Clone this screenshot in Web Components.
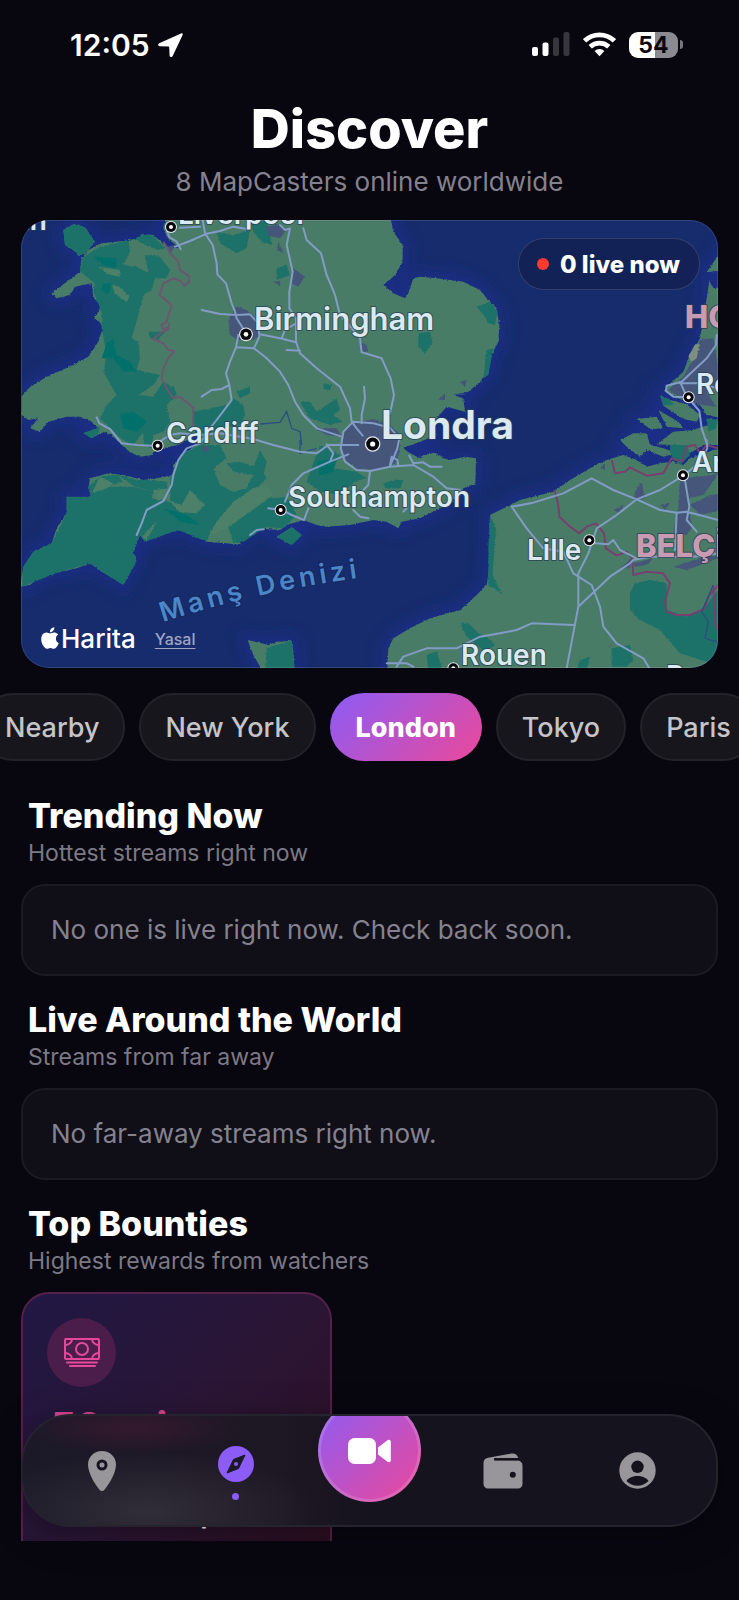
<!DOCTYPE html>
<html lang="en">
<head>
<meta charset="utf-8">
<meta name="viewport" content="width=device-width, initial-scale=1">
<title>Discover</title>
<style>
  body {
    margin: 0;
    background: #08060f;
    color: #fff;
    font-family: Inter, 'Liberation Sans', sans-serif;
  }
</style>
</head>
<body>
<discover-app>
  <status-bar slot="status" time="12:05" battery="54"></status-bar>
  <page-header>
    Discover
    <span slot="subtitle">8 MapCasters online worldwide</span>
  </page-header>
  <live-map>0 live now</live-map>
  <city-chips>
    <city-chip>Nearby</city-chip>
    <city-chip>New York</city-chip>
    <city-chip active>London</city-chip>
    <city-chip>Tokyo</city-chip>
    <city-chip>Paris</city-chip>
  </city-chips>
  <stream-section heading="Trending Now" subtitle="Hottest streams right now">
    <empty-card>No one is live right now. Check back soon.</empty-card>
  </stream-section>
  <stream-section heading="Live Around the World" subtitle="Streams from far away">
    <empty-card>No far-away streams right now.</empty-card>
  </stream-section>
  <stream-section heading="Top Bounties" subtitle="Highest rewards from watchers">
    <bounty-card reward="50 coins">Street music at the old shop</bounty-card>
  </stream-section>
  <tab-bar slot="tabs"></tab-bar>
</discover-app>

<script>
class DiscoverApp extends HTMLElement {
  constructor () {
    super()
    this.shadow = this.attachShadow({ mode: 'open' })
  }

  connectedCallback () {
    this.shadow.innerHTML =
      /* html */`
    <style>
      :host {
        display: flex;
        flex-direction: column;
        height: 100vh;
        overflow: hidden;
      }
      main {
        flex: 1;
        min-height: 0;
        overflow: hidden;
        margin-bottom: 59px;
      }
    </style>
    <slot name="status"></slot>
    <main><slot></slot></main>
    <slot name="tabs"></slot>
    `
  }
}

class StatusBar extends HTMLElement {
  constructor () {
    super()
    this.shadow = this.attachShadow({ mode: 'open' })
  }

  connectedCallback () {
    this.shadow.innerHTML =
      /* html */`
    <style>
      :host {
        display: flex;
        align-items: center;
        justify-content: space-between;
        height: 89px;
        padding: 0 56px 0 70px;
        flex: none;
      }
      div {
        display: flex;
        align-items: center;
      }
      .time {
        gap: 8px;
        font-size: 30px;
        font-weight: 600;
      }
      .system {
        gap: 13px;
      }
      .battery {
        justify-content: center;
        width: 49px;
        height: 26px;
        border-radius: 9px;
        background: linear-gradient(90deg, #fff 54%, #8b8a90 54%);
        color: #08060f;
        font-size: 23px;
        font-weight: 700;
      }
      .charge {
        gap: 2px;
      }
      .nub {
        width: 3px;
        height: 9px;
        border-radius: 0 3px 3px 0;
        background: #77767c;
      }
    </style>
    <div class="time">
      <span>${this.getAttribute('time')}</span>
      <svg width="25" height="24" viewBox="0 0 25 24" fill="#fff"><path d="M23 .4 1.2 10.2C-.4 11-.1 13.2 1.700 13.300L10.500 13.600C11 13.600 11.200 13.900 11.200 14.300L11.600 22.500C11.700 24.300 13.900 24.600 14.700 23L24.600 2.100C25.200.8 24.200-.1 23 .4Z"/></svg>
    </div>
    <div class="system">
      <svg width="38" height="25" viewBox="0 0 38 25">
        <rect x="0" y="15" width="6" height="9" rx="2" fill="#fff"/>
        <rect x="10.500" y="10.500" width="6" height="13.500" rx="2" fill="#fff"/>
        <rect x="21" y="5.500" width="6" height="18.500" rx="2" fill="#38363d"/>
        <rect x="31.500" y="0" width="6" height="24" rx="2" fill="#38363d"/>
      </svg>
      <svg width="33" height="25" viewBox="0 0 33 25" fill="none" stroke="#fff" stroke-width="4.800">
        <path d="M1.600 8.800a21.500 21.500 0 0 1 29.800 0"/>
        <path d="M7.200 14.800a13.600 13.600 0 0 1 18.600 0"/>
        <path d="M11.600 19a7 7 0 0 1 9.800 0L16.500 24.300Z" fill="#fff" stroke="none"/>
      </svg>
      <div class="charge">
        <div class="battery">${this.getAttribute('battery')}</div>
        <div class="nub"></div>
      </div>
    </div>
    `
  }
}

class PageHeader extends HTMLElement {
  constructor () {
    super()
    this.shadow = this.attachShadow({ mode: 'open' })
  }

  connectedCallback () {
    this.shadow.innerHTML =
      /* html */`
    <style>
      :host {
        display: block;
        padding: 12px 21px 21px;
        text-align: center;
      }
      h1 {
        margin: 0 0 8px;
        font-size: 54px;
        line-height: 56px;
        font-weight: 800;
      }
      p {
        margin: 0;
        color: #85828f;
        font-size: 26px;
        line-height: 34px;
      }
    </style>
    <h1><slot></slot></h1>
    <p><slot name="subtitle"></slot></p>
    `
  }
}

class LiveMap extends HTMLElement {
  constructor () {
    super()
    this.shadow = this.attachShadow({ mode: 'open' })
  }

  connectedCallback () {
    const cities = [
      [453, 36], [678, 358, 1.15], [413, 692], [1058, 687, 1.3], [782, 885],
      [1708, 976], [1300, 1360], [2006, 547], [1989, 781]
    ]
    const pins = cities.map(([x, y, k = 1]) =>
      `<g transform="translate(${x} ${y}) scale(${k})"><circle r="18" fill="#e6e8ee"/><circle r="15" fill="#08070c"/><circle r="6" fill="#fff"/></g>`
    ).join('')

    this.shadow.innerHTML =
      /* html */`
    <style>
      :host {
        display: block;
        position: relative;
        height: 448px;
        margin: 0 21px;
        border-radius: 28px;
        overflow: hidden;
        background: #172b6b;
      }
      :host::after {
        content: '';
        position: absolute;
        inset: 0;
        border: 1px solid rgba(255, 255, 255, .12);
        border-radius: 28px;
        pointer-events: none;
      }
      .map {
        display: block;
        width: 100%;
        height: 100%;
      }
      text {
        paint-order: stroke;
        stroke: rgba(42, 62, 84, .75);
        stroke-width: 2px;
        stroke-linejoin: round;
      }
      .city {
        fill: #dbe9f0;
        font-size: 28px;
        font-weight: 600;
      }
      .large {
        font-size: 31px;
      }
      .capital {
        font-size: 39px;
        font-weight: 700;
      }
      .country {
        fill: #c99bb2;
        font-size: 31px;
        font-weight: 800;
      }
      .sea {
        fill: #4a86c8;
        stroke: #15265c;
        font-size: 27px;
        font-weight: 600;
        letter-spacing: 4px;
      }
      .badge {
        position: absolute;
        top: 18px;
        right: 18px;
        display: flex;
        align-items: center;
        gap: 11px;
        height: 50px;
        padding: 0 19px 0 18px;
        border: 1px solid rgba(255, 255, 255, .13);
        border-radius: 26px;
        background: rgba(15, 22, 60, .45);
        font-size: 24px;
        font-weight: 800;
      }
      .badge i {
        width: 12px;
        height: 12px;
        border-radius: 50%;
        background: #ff3b30;
      }
      .credit {
        position: absolute;
        left: 20px;
        bottom: 12px;
        display: flex;
        align-items: center;
        font-size: 26px;
        line-height: 34px;
        font-weight: 500;
      }
      .credit svg {
        margin: 0 2px 3px 0;
      }
      .credit a {
        margin-left: 19px;
        color: #9ea4c4;
        font-size: 16px;
        line-height: 20px;
        text-underline-offset: 3px;
      }
    </style>
    <svg class="map" viewBox="0 0 697 448" preserveAspectRatio="xMidYMid slice">
      <defs>
        <filter id="coast" x="0" y="0" width="100%" height="100%">
          <feTurbulence type="fractalNoise" baseFrequency=".16" numOctaves="2" seed="4"/>
          <feDisplacementMap in="SourceGraphic" scale="8" xChannelSelector="R" yChannelSelector="G"/>
        </filter>
        <filter id="soft"><feGaussianBlur stdDeviation="22"/></filter>
        <g id="land">
          <path d="M435 14 430 40 445 72 480 100 440 95 400 60 370 57 345 72 310 78 245 85 205 105 185 130 180 170 140 200 95 235 110 250 150 240 165 215 215 205 220 250 245 265 235 290 222 310 240 322 248 340 235 380 205 425 160 450 80 485 25 520 5 545 5 600 25 615 55 610 30 640 60 650 85 620 140 605 180 605 215 620 235 640 190 655 215 670 250 650 275 660 305 690 330 712 360 725 395 720 405 705 430 700 475 690 510 670 550 625 610 577 590 610 550 650 540 685 490 715 460 750 460 780 410 790 370 795 310 780 265 775 210 790 205 820 215 850 140 845 140 895 110 940 95 985 40 1010 10 1055 0 1115 30 1110 65 1080 120 1070 170 1060 210 1045 245 1070 280 1090 310 1110 320 1070 350 1040 340 1010 360 960 375 980 420 955 475 945 530 965 560 980 620 985 660 990 670 965 665 945 700 940 780 945 800 930 850 915 890 930 915 935 990 930 1060 915 1100 920 1135 940 1145 920 1200 910 1260 880 1310 850 1330 820 1366 805 1368 730 1335 725 1290 735 1230 720 1200 730 1165 712 1150 698 1180 688 1200 680 1250 660 1240 640 1250 610 1280 575 1335 590 1330 550 1300 540 1345 530 1380 500 1405 470 1415 420 1435 380 1438 330 1430 280 1400 250 1380 225 1330 200 1250 190 1200 185 1180 190 1165 235 1155 250 1120 235 1090 210 1125 180 1148 140 1148 90 1120 50 1110 0 435 0Z"/>
          <path d="M130 45 160 28 195 35 210 60 225 80 195 115 175 122 160 105 135 90Z"/>
          <path d="M770 965 815 937 845 960 815 990Z"/>
          <path d="M1200 725 1240 713 1270 725 1250 738Z"/>
          <path d="M683 1275 745 1290 770 1280 815 1278 820 1310 825 1380 735 1380 700 1320Z"/>
          <path d="M1410 900 1460 875 1500 855 1600 830 1650 795 1710 760 1760 735 1810 720 1850 735 1880 755 1920 745 1960 740 1990 750 2010 730 2095 700 2110 700 2110 1380 1100 1380 1105 1300 1120 1270 1170 1240 1230 1210 1320 1185 1370 1140 1400 1110 1405 1080 1415 960Z"/>
          <path d="M2110 110 2085 135 2060 172 2110 165ZM2110 215 2080 220 2068 198 2060 250 2050 310 2040 370 2010 420 1990 470 1940 515 1935 528 1970 548 2000 560 2040 570 2060 600 2110 610Z"/>
          <path d="M1920 540 1950 555 2000 568 2040 600 2030 620 1990 612 1930 572ZM1915 585 1975 620 1990 640 1940 635ZM1850 612 1910 605 1930 640 1890 642ZM1910 688 1960 650 2020 645 2110 615 2110 690 2050 690 2000 720 1960 690ZM1800 675 1840 655 1880 655 1890 690 1930 700 1970 715 1930 725 1880 705 1860 725 1820 695Z"/>
        </g>
      </defs>
      <g transform="translate(-1 -5) scale(.33333)">
        <rect width="2110" height="1380" fill="#172c6c"/>
        <use href="#land" fill="#1a2f90" stroke="#1a2f90" stroke-width="36" opacity=".75" filter="url(#soft)"/>
        <g filter="url(#coast)">
          <use href="#land" fill="#487c66"/>
          <g fill="#1d7169">
            <path d="M130 45 160 28 195 35 210 60 225 80 195 115 175 122 160 105 135 90Z"/>
            <path d="M240 95 300 82 325 75 330 110 310 150 350 155 385 175 375 120 420 125 450 165 440 190 405 190 395 225 370 240 355 300 335 370 355 380 360 430 350 465 420 480 400 510 355 540 400 545 430 500 465 520 470 540 440 570 450 620 430 650 400 660 395 700 372 690 370 650 340 690 300 670 240 610 260 570 290 540 250 470 260 420 245 340 245 290 220 230 225 205 180 170 190 125ZM190 655 240 635 235 655 215 670Z"/>
            <path d="M345 72 370 57 400 62 435 100 415 105 380 92Z"/>
            <path d="M205 845 270 815 340 815 400 830 395 850 450 860 450 790 480 720 540 690 600 690 620 730 580 760 600 810 640 830 680 820 700 780 640 770 620 745 660 740 720 760 740 790 700 830 640 870 610 910 580 935 560 980 475 945 375 980 360 960 340 1010 350 1040 310 1110 270 1085 210 1045 120 1070 5 1115 10 1055 40 1010 95 985 140 895 140 845Z"/>
            <path d="M205 815 240 785 290 778 310 800 260 815 215 850ZM290 778 350 795 400 795 440 800 445 835 400 830 340 812Z"/>
            <path d="M590 50 640 60 690 45 680 100 650 115 600 85ZM690 14 740 14 755 90 725 80 700 50Z"/>
            <path d="M520 590 620 570 640 550 670 570 675 600 660 630 600 640 560 660 525 655ZM650 530 690 515 690 535 660 550ZM385 350 435 350 415 375 390 370Z"/>
            <path d="M900 690 960 720 940 760 1010 770 1040 790 1005 800 960 840 900 830 860 800ZM720 855 800 845 830 900 790 940 720 935ZM620 920 680 890 750 840 770 860 740 935 670 980 640 985ZM770 965 815 937 845 960 815 990Z"/>
            <path d="M1370 275 1410 260 1432 290 1425 330 1405 325 1395 305ZM1195 355 1230 350 1238 385 1215 415 1195 395ZM1400 405 1420 400 1405 480 1390 490ZM840 560 870 560 890 590 950 550 960 585 940 600 970 620 930 630 870 610ZM1090 805 1120 795 1150 795 1140 820 1095 820ZM770 160 800 150 810 180 770 195ZM910 505 935 510 930 525 910 522ZM720 705 740 740 730 780 700 760Z"/>
            <path d="M1830 1135 1845 1105 1890 1095 1940 1105 1940 1185 2000 1205 2050 1185 2110 1100 2110 1380 2060 1340 1980 1315 1920 1245 1860 1215 1830 1185Z"/>
            <path d="M1775 1300 1830 1290 1840 1335 1820 1355 1775 1355ZM1320 1225 1345 1225 1375 1255 1400 1265 1425 1290 1395 1310 1340 1265ZM1220 1320 1250 1310 1270 1370 1225 1370ZM1410 900 1428 940 1418 1080 1445 1135 1405 1110 1405 1000ZM740 1298 815 1278 825 1380 735 1380ZM1680 1335 1710 1325 1700 1365 1670 1365Z"/>
            <path d="M1920 540 1950 555 1960 570 1930 572ZM2060 610 2095 615 2090 640 2065 650ZM1950 690 2000 690 2010 720 1980 750 1950 720Z"/>
          </g>
          <g fill="#00706b">
            <path d="M220 125 290 130 290 160 250 150ZM250 205 275 205 265 240 245 225ZM260 385 280 370 290 420 330 440 350 470 310 470 280 430 245 430ZM300 600 340 590 380 620 350 650 310 640Z"/>
            <path d="M430 880 500 900 540 930 480 920ZM890 740 950 730 940 770 900 780ZM1440 1135 1450 1140 1440 1130Z"/>
          </g>
          <g fill="#4d8067">
            <path d="M235 155 265 160 300 165 300 185 265 178ZM275 210 300 215 328 245 320 262 285 235ZM445 855 485 870 510 825 555 870 530 895 480 892ZM400 825 450 820 450 850 410 855ZM215 835 240 785 280 805 270 815ZM365 965 410 920 380 975ZM590 920 640 860 700 820 740 810 760 840 690 890 620 940 565 965Z"/>
          </g>
          <g fill="#44567a">
            <path d="M965 690 975 650 990 625 1060 612 1110 630 1140 660 1140 710 1125 745 1080 765 1010 762 970 730Z"/>
            <path d="M625 315 650 275 680 285 700 300 720 330 720 360 700 375 655 375 630 360Z"/>
            <path d="M740 35 780 28 800 45 780 70 745 62ZM820 160 855 185 835 215 815 205ZM775 80 790 115 772 105ZM1020 380 1040 390 1045 410 1025 412ZM1255 555 1275 535 1275 555ZM1320 500 1340 495 1335 515ZM440 95 465 90 450 120ZM760 200 780 198 782 215ZM885 640 950 640 965 665 920 660ZM550 690 570 700 560 715 545 705Z"/>
            <path d="M1980 790 2080 780 2100 770 2050 840 2005 850 2015 940 2000 960 1960 955 1975 880ZM2010 870 2070 840 2110 835 2110 885 2040 900ZM1845 830 1865 800 1875 850 1840 858ZM1780 885 1810 870 1800 895ZM1960 1055 2060 1022 2110 1025 2000 1065ZM1800 1060 1835 1030 1830 1060ZM1840 1045 1900 1030 1880 1050 1845 1055ZM1740 760 1755 745 1755 765ZM1920 870 1950 865 1935 885Z"/>
            <path d="M2040 375 2080 370 2095 460 2110 500 2060 530 2090 575 2050 570 2000 560 1945 525 1990 485 2020 430ZM1770 1290 1780 1285 1765 1300Z"/>
          </g>
          <path d="M2025 388 2040 388 2030 430 2015 440 2005 425Z" fill="#7c8f80"/>
        </g>
        <g fill="none" stroke="#6d5670" stroke-width="6" stroke-linejoin="round">
          <path d="M430 80 455 120 475 140 480 165 505 182 508 200 492 212 482 198 460 190 430 205 418 240 440 258 455 272 445 300 440 320 424 330 428 342 445 338 448 325M448 342 425 352 400 372 430 385 445 405 462 408 445 430 430 460 425 490 440 520 460 550 480 545 520 578 518 640"/>
          <path d="M1603 825 1615 870 1618 905 1650 935 1678 955 1700 935 1728 925 1752 955 1758 1000 1790 1022 1820 1010 1836 1030 1840 1080 1880 1070 1930 1075 1950 1105 1935 1160 1940 1190 1970 1200 2010 1200 2055 1180 2065 1145 2095 1110M2080 1110 2085 1220 2095 1250M1775 735 1785 775 1815 770 1830 757 1880 782 1930 775 1955 730 1985 740 2000 695 2025 690 2040 715 2060 690 2095 700" stroke="#79406f"/>
        </g>
        <g fill="none" stroke="#2b4f80" stroke-width="4">
          <path d="M720 627 780 622 800 590 815 640 840 650 845 690M2080 1110 2045 1190 2065 1220 2055 1270 2095 1282M840 675 840 715 890 700M1305 538 1335 538"/>
        </g>
        <g fill="none" stroke="#829cc6" stroke-width="6" stroke-linejoin="round" stroke-linecap="round">
          <path d="M548 14 555 55 578 90 590 145 592 178 618 205 635 265 645 290 650 310 672 345M465 95 510 78 560 56 600 48 640 35 680 42M482 102 470 80 448 66 442 50M480 38 540 35M545 285 600 297 650 300 690 298 715 325 718 365 702 400 650 397M655 360 648 397 630 440 618 475 628 510 635 555 605 595 578 630 540 685 500 700 475 735 460 780 455 810 430 858 380 885 365 925 350 960M628 510 605 522 575 525 545 545M702 400 740 430 780 470 805 510 825 560 850 600 890 640 965 665"/>
          <path d="M780 30 795 45 810 40 805 65 800 90 818 170 808 230 808 280 828 310 828 380 840 415 890 460 960 515 990 580 995 620 1010 640 1028 662M850 40 860 75 903 115 920 180 935 215 945 240 960 300 1000 345 1020 370 1025 412 1085 430 1112 490 1122 540 1110 595M1032 515 1035 550 1025 600 1025 625M720 358 780 370 828 382M785 370 795 345 828 325M800 405 840 407"/>
          <path d="M1000 620 970 650 962 700 975 740 1010 765 1050 768 1110 755 1132 700 1138 670 1110 638 1060 625Z"/>
          <path d="M230 607 238 625 270 642 305 685 350 690 400 692 450 660 480 655 540 660 600 655 700 672 760 690 840 710 890 715 925 690 1015 690M920 688 940 715 930 740M795 860 815 810 850 775 930 740 985 718M1050 768 1045 810 1030 825M1110 755 1180 750 1240 785 1280 820 1320 825M1110 750 1115 725 1132 735 1135 750M1168 722 1180 745 1210 742 1230 755 1265 755M745 880 785 885 815 900 852 915 865 880M1000 885 1020 905 1045 910M1150 890 1160 880M690 960 710 945 730 943"/>
          <path d="M1475 875 1540 863 1630 835 1715 790 1780 825 1850 853 1920 885 1970 893 2000 890 2050 903 2095 915M1475 875 1520 940 1570 1000 1630 1010 1660 1075 1715 1110 1740 1175 1750 1235 1790 1285 1870 1330 1888 1360M1985 785 1920 825 1850 853 1790 900 1730 940 1705 1015 1675 1075 1675 1175 1640 1360M1675 1175 1770 1085 1830 1045 1840 1035 1890 1025 2020 1025 2095 1015M1725 985 1765 988 1780 975 1800 1005 1850 1030M1995 795 2008 875 2000 915 2030 950M1970 893 1965 1005M1440 1255 1490 1245 1535 1225 1660 1230M1130 1355 1150 1325 1220 1300 1310 1300 1380 1265 1440 1255M1100 1345 1160 1345 1180 1355M2060 675 2062 700 2040 740 2000 775"/>
          <path d="M2090 360 2088 390 2060 430 1985 500 1940 512 1938 528 1960 545 2000 547M1980 500 2000 545M1980 505 2035 505 2095 520M2010 555 2038 588 2045 640 2062 690"/>
        </g>
        ${pins}
      </g>
      <g class="city">
        <text x="26" y="10" text-anchor="end">Dublin</text>
        <text x="157" y="4">Liverpool</text>
        <text x="233" y="110" class="large">Birmingham</text>
        <text x="145" y="223">Cardiff</text>
        <text x="267" y="287">Southampton</text>
        <text x="506" y="340">Lille</text>
        <text x="440" y="445">Rouen</text>
        <text x="675" y="174">Rotterdam</text>
        <text x="671" y="252">Anvers</text>
        <text x="645" y="466">Paris</text>
      </g>
      <text class="city capital" x="360" y="219">Londra</text>
      <text class="country" x="664" y="108">HOLLANDA</text>
      <text class="country" x="615" y="337">BELÇİKA</text>
      <path id="channel" d="M142 402Q239 370 360 355" fill="none"/>
      <text class="sea"><textPath href="#channel">Manş Denizi</textPath></text>
    </svg>
    <div class="credit">
      <svg width="18" height="22" viewBox="2 0 20 24" fill="#fff"><path d="M12.152 6.896c-.948 0-2.415-1.078-3.96-1.04-2.04.027-3.910 1.183-4.961 3.014-2.117 3.675-.546 9.103 1.519 12.090 1.013 1.454 2.208 3.090 3.792 3.039 1.520-.065 2.090-.987 3.935-.987 1.831 0 2.350.987 3.960.948 1.637-.026 2.676-1.480 3.676-2.948 1.156-1.688 1.636-3.325 1.662-3.415-.039-.013-3.182-1.221-3.220-4.857-.026-3.040 2.480-4.494 2.597-4.559-1.429-2.090-3.623-2.324-4.390-2.376-2-.156-3.675 1.090-4.610 1.090zM15.530 3.830c.843-1.012 1.400-2.427 1.245-3.830-1.207.052-2.662.805-3.532 1.818-.780.896-1.454 2.338-1.273 3.714 1.338.104 2.715-.688 3.559-1.701"/></svg>
      <span>Harita</span>
      <a href="#legal">Yasal</a>
    </div>
    <div class="badge"><i></i><span><slot></slot></span></div>
    `
  }
}

class CityChips extends HTMLElement {
  constructor () {
    super()
    this.shadow = this.attachShadow({ mode: 'open' })
  }

  connectedCallback () {
    // the row is scrolled a little, so the first chip runs off the left edge
    this.shadow.innerHTML =
      /* html */`
    <style>
      :host {
        display: block;
        overflow: hidden;
        padding: 25px 0 35px;
      }
      nav {
        display: flex;
        gap: 14px;
        margin-left: -21px;
      }
    </style>
    <nav><slot></slot></nav>
    `
  }
}

class CityChip extends HTMLElement {
  constructor () {
    super()
    this.shadow = this.attachShadow({ mode: 'open' })
  }

  connectedCallback () {
    this.shadow.innerHTML =
      /* html */`
    <style>
      :host {
        display: block;
        flex: none;
      }
      button {
        height: 68px;
        padding: 0 24px;
        border: 2px solid #242229;
        border-radius: 34px;
        background: #18161d;
        color: #c5c4c8;
        font: 500 27px Inter, sans-serif;
        white-space: nowrap;
      }
      :host([active]) button {
        padding: 0 26px;
        border: 0;
        background: linear-gradient(135deg, #8b5cf6, #ec4899);
        color: #fff;
        font-weight: 800;
      }
    </style>
    <button type="button"><slot></slot></button>
    `
  }
}

class StreamSection extends HTMLElement {
  constructor () {
    super()
    this.shadow = this.attachShadow({ mode: 'open' })
  }

  connectedCallback () {
    this.shadow.innerHTML =
      /* html */`
    <style>
      :host {
        display: block;
        padding: 0 21px;
        margin-bottom: 24px;
      }
      h2 {
        margin: 0 7px 3px;
        font-size: 34px;
        line-height: 40px;
        font-weight: 800;
      }
      p {
        margin: 0 7px 17px;
        color: #7c7986;
        font-size: 23px;
        line-height: 28px;
      }
    </style>
    <h2>${this.getAttribute('heading')}</h2>
    <p>${this.getAttribute('subtitle')}</p>
    <slot></slot>
    `
  }
}

class EmptyCard extends HTMLElement {
  constructor () {
    super()
    this.shadow = this.attachShadow({ mode: 'open' })
  }

  connectedCallback () {
    this.shadow.innerHTML =
      /* html */`
    <style>
      :host {
        display: block;
        box-sizing: border-box;
        padding: 27px 28px;
        border: 2px solid #1b1922;
        border-radius: 24px;
        background: #100e17;
        color: #85828f;
        font-size: 26px;
        line-height: 34px;
      }
    </style>
    <slot></slot>
    `
  }
}

class BountyCard extends HTMLElement {
  constructor () {
    super()
    this.shadow = this.attachShadow({ mode: 'open' })
  }

  connectedCallback () {
    this.shadow.innerHTML =
      /* html */`
    <style>
      :host {
        display: block;
        box-sizing: border-box;
        width: 311px;
        height: 320px;
        padding: 24px;
        border: 2px solid #55204a;
        border-radius: 28px;
        background: linear-gradient(135deg, #201844, #2b1534 50%, #2c0d1c);
      }
      .icon {
        display: flex;
        align-items: center;
        justify-content: center;
        width: 69px;
        height: 69px;
        border-radius: 50%;
        background: #4b1d4a;
      }
      .reward {
        margin: 16px 4px 12px;
        color: #d9458f;
        font-size: 38px;
        line-height: 46px;
        font-weight: 800;
      }
      .title {
        margin: 0 4px;
        font-size: 28px;
        line-height: 35px;
        font-weight: 600;
      }
    </style>
    <div class="icon">
      <svg width="36" height="30" viewBox="0 0 36 30" fill="none" stroke="#e5489b" stroke-width="2">
        <rect x="1" y="1" width="34" height="20" rx="1"/>
        <circle cx="18" cy="11" r="6"/>
        <path d="M8 1a7 6 0 0 1-7 6M28 1a7 6 0 0 0 7 6M8 21a7 6 0 0 0-7-6M28 21a7 6 0 0 1 7-6M3 24.500H33M6 28H31" stroke-linecap="round"/>
      </svg>
    </div>
    <div class="reward">${this.getAttribute('reward')}</div>
    <div class="title"><slot></slot></div>
    `
  }
}

class TabBar extends HTMLElement {
  constructor () {
    super()
    this.shadow = this.attachShadow({ mode: 'open' })
  }

  connectedCallback () {
    // the glows stand for the bounty card seen through frosted glass
    this.shadow.innerHTML =
      /* html */`
    <style>
      :host {
        display: block;
        position: fixed;
        left: 21px;
        right: 21px;
        bottom: 73px;
        border-radius: 50px;
        box-shadow: 0 8px 36px rgba(0, 0, 0, .35);
      }
      nav {
        display: flex;
        box-sizing: border-box;
        height: 113px;
        padding: 0 12px;
        overflow: hidden;
        border: 2px solid #25232d;
        border-radius: 50px;
        background:
          radial-gradient(110px 26px at 110px 12px, rgba(90, 26, 58, .4), transparent),
          radial-gradient(170px 60px at 125px 95px, rgba(62, 60, 68, .6), transparent),
          linear-gradient(90deg, #1b1928 0, #1e1724 260px, #15131e 340px);
      }
      button {
        display: flex;
        flex: 1;
        flex-direction: column;
        align-items: center;
        justify-content: center;
        gap: 11px;
        padding: 0;
        border: 0;
        background: none;
        color: #98969b;
      }
      svg {
        display: block;
      }
      .active {
        padding-top: 4px;
        color: #8b5cf6;
      }
      .active i {
        width: 7px;
        height: 7px;
        border-radius: 50%;
        background: #8b5cf6;
      }
      .live {
        justify-content: flex-start;
      }
      .live span {
        display: flex;
        align-items: center;
        justify-content: center;
        box-sizing: border-box;
        width: 103px;
        height: 103px;
        margin-top: -17px;
        border: 3px solid rgba(255, 255, 255, .15);
        border-radius: 50%;
        background: linear-gradient(135deg, #8b5cf6, #ec4899) border-box;
      }
    </style>
    <nav>
      <button type="button" aria-label="Map">
        <svg width="30" height="40" viewBox="0 0 30 40">
          <path fill="currentColor" d="M15 0C7 0 1 6 1 13.500c0 8 6 18.500 11.500 25.300a3.200 3.200 0 0 0 5 0C23 32 29 21.500 29 13.500 29 6 23 0 15 0Z"/>
          <circle cx="15" cy="14" r="4" fill="none" stroke="#171522" stroke-width="3"/>
        </svg>
      </button>
      <button type="button" class="active" aria-label="Discover">
        <svg width="36" height="36" viewBox="0 0 36 36">
          <circle cx="18" cy="18" r="18" fill="currentColor"/>
          <path d="M27 9 15.500 13.500 9 27 20.500 22.500Z" fill="#1b1926" stroke="#1b1926" stroke-width="1" stroke-linejoin="round"/>
          <circle cx="18" cy="18" r="2" fill="currentColor"/>
        </svg>
        <i></i>
      </button>
      <button type="button" class="live" aria-label="Go live">
        <span>
          <svg width="43" height="26" viewBox="0 0 43 26" fill="#fff">
            <rect width="28" height="26" rx="6.500"/>
            <path d="M30 9.500 39.500 2.200C41 1.100 42.800 2 42.800 3.800V22.200C42.800 24 41 24.900 39.500 23.800L30 16.500Z"/>
          </svg>
        </span>
      </button>
      <button type="button" aria-label="Wallet">
        <svg width="40" height="36" viewBox="0 0 40 36" fill="currentColor">
          <path fill-rule="evenodd" d="M5.500 7.500H34.500A5 5 0 0 1 39.500 12.500V31A4.500 4.500 0 0 1 35 35.500H5A4.500 4.500 0 0 1 .5 31V10C.5 7 2 5.400 5 4.800L28.500.6C32 0 34.500 2 35.300 5H11.500V7.500ZM29.800 18.800a3 3 0 1 0 0 6 3 3 0 0 0 0-6Z"/>
          <path d="M11 5.300H36V7.200H11Z" fill="#14121d"/>
        </svg>
      </button>
      <button type="button" aria-label="Profile">
        <svg width="37" height="37" viewBox="0 0 37 37">
          <circle cx="18.500" cy="18.500" r="18.200" fill="currentColor"/>
          <circle cx="18.500" cy="14.800" r="6.200" fill="#14121d"/>
          <path d="M7.500 29C9.500 25.500 14 24 18.500 24S27.500 25.500 29.500 29C26.500 32.200 22.800 33.800 18.500 33.800S10.500 32.200 7.500 29Z" fill="#14121d"/>
        </svg>
      </button>
    </nav>
    `
  }
}

customElements.define('discover-app', DiscoverApp)
customElements.define('status-bar', StatusBar)
customElements.define('page-header', PageHeader)
customElements.define('live-map', LiveMap)
customElements.define('city-chips', CityChips)
customElements.define('city-chip', CityChip)
customElements.define('stream-section', StreamSection)
customElements.define('empty-card', EmptyCard)
customElements.define('bounty-card', BountyCard)
customElements.define('tab-bar', TabBar)
</script>
</body>
</html>
